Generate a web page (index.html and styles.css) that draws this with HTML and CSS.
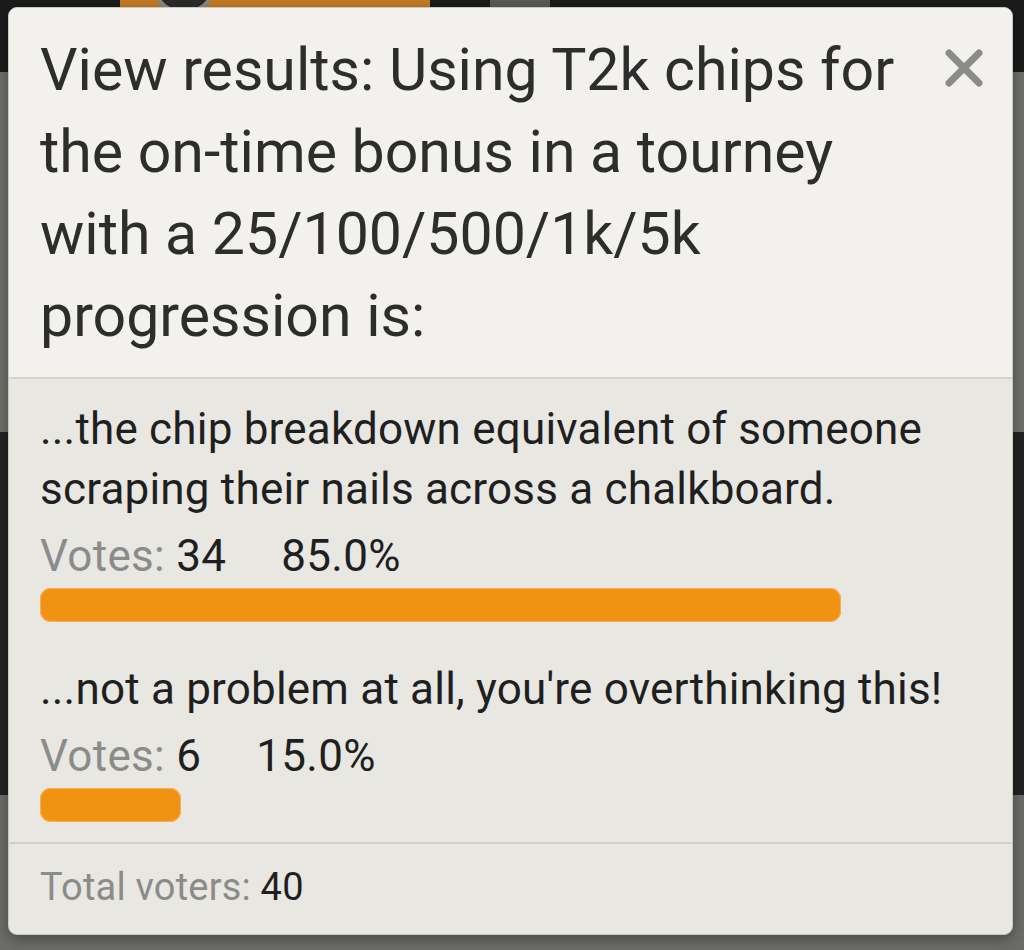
FILE: index.html
```html
<!DOCTYPE html>
<html>
<head>
<meta charset="utf-8">
<link rel="stylesheet" href="styles.css">
</head>
<body>
<div class="backdrop">
  <div class="band band-top">
    <div class="thumb"><span class="thumb-circle"></span></div>
    <div class="thumb2"></div>
  </div>
  <div class="band band-gray"></div>
  <div class="band band-dark"></div>
  <div class="band band-gray2"></div>
</div>
<div class="modal">
  <div class="modal-header">
    <h1 class="title">View results: Using T2k chips for the on-time bonus in a tourney with a 25/100/500/1k/5k progression is:</h1>
    <button class="close" aria-label="Close">
      <svg width="38" height="38" viewBox="0 0 38 38"><path d="M4 4 L34 34 M34 4 L4 34" stroke="#8b8b89" stroke-width="7" stroke-linecap="round"/></svg>
    </button>
  </div>
  <div class="modal-body">
    <div class="option">
      <div class="option-text">...the chip breakdown equivalent of someone scraping their nails across a chalkboard.</div>
      <div class="votes"><span class="label">Votes:</span> <span class="num">34</span><span class="pct">85.0%</span></div>
      <div class="bar-track"><div class="bar" style="width:85%"></div></div>
    </div>
    <div class="option">
      <div class="option-text">...not a problem at all, you're overthinking this!</div>
      <div class="votes"><span class="label">Votes:</span> <span class="num">6</span><span class="pct">15.0%</span></div>
      <div class="bar-track"><div class="bar" style="width:15%"></div></div>
    </div>
  </div>
  <div class="modal-footer">
    <span class="label">Total voters:</span> <span class="num">40</span>
  </div>
</div>
</body>
</html>
```
FILE: styles.css
```css
html, body {
  margin: 0;
  padding: 0;
  width: 1024px;
  height: 950px;
  overflow: hidden;
  font-family: Roboto, "Noto Sans", sans-serif;
}
.backdrop {
  position: absolute;
  inset: 0;
  display: flex;
  flex-direction: column;
}
.band-top {
  height: 72px;
  background: #1b1b1b;
  position: relative;
}
.thumb {
  position: absolute;
  left: 120px;
  top: 0;
  width: 310px;
  height: 10px;
  background: #c47a26;
}
.thumb-circle {
  position: absolute;
  left: 35px;
  top: -30px;
  width: 50px;
  height: 36px;
  border-radius: 50%;
  border: 4px solid #8a8a8a;
  background: #2a2a2a;
}
.thumb2 {
  position: absolute;
  left: 490px;
  top: 0;
  width: 60px;
  height: 8px;
  background: #5a5a5a;
}
.band-gray {
  height: 360px;
  background: #6f6f6c;
}
.band-dark {
  height: 363px;
  background: #232323;
}
.band-gray2 {
  flex: 1;
  background: #6c6c69;
}
.modal {
  position: absolute;
  left: 8px;
  top: 7px;
  width: 1005px;
  height: 928px;
  box-sizing: border-box;
  border: 1px solid #c8c7c0;
  border-radius: 9px;
  background: #e8e7e2;
  overflow: hidden;
  box-shadow: 0 4px 14px rgba(0,0,0,0.35);
  display: flex;
  flex-direction: column;
}
.modal-header {
  background: #f2f1ed;
  border-bottom: 2px solid #d3d2cc;
  display: flex;
  align-items: flex-start;
  padding: 21px 29px 20px 31px;
}
.title {
  margin: 0;
  width: 880px;
  font-weight: 400;
  font-size: 59px;
  line-height: 82px;
  letter-spacing: 0;
  color: #2d2d2d;
}
.close {
  border: 0;
  background: none;
  padding: 0;
  margin: 20px 0 0 auto;
  width: 38px;
  height: 38px;
}
.modal-body {
  padding: 20px 30px 20px 31px;
  display: flex;
  flex-direction: column;
  gap: 37px;
  border-bottom: 2px solid #d0cfc9;
}
.option-text {
  font-size: 44px;
  line-height: 60px;
  letter-spacing: 0.2px;
  color: #1f1f1f;
}
.votes {
  margin-top: 7px;
  font-size: 44px;
  line-height: 60px;
  letter-spacing: 0.3px;
  color: #1f1f1f;
}
.label {
  color: #8b8b89;
}
.pct {
  margin-left: 55px;
}
.bar-track {
  margin-top: 2px;
  height: 34px;
}
.bar {
  height: 100%;
  background: #f09212;
  border-radius: 11px;
  box-shadow: inset 0 0 0 1px #f5b054;
}
.modal-footer {
  padding: 18px 31px;
  font-size: 38px;
  line-height: 50px;
  letter-spacing: 0.2px;
  color: #1f1f1f;
}
```
